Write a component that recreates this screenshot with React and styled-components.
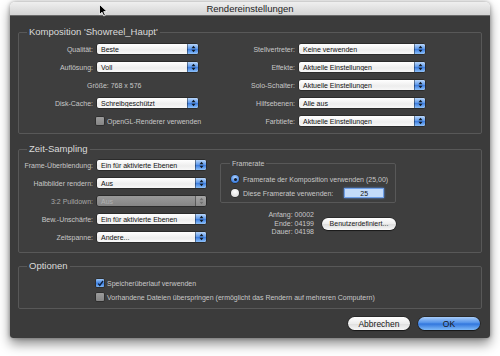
import styled, { createGlobalStyle } from 'styled-components';

const GlobalStyle = createGlobalStyle`
  html, body {
    margin: 0;
    padding: 0;
    background: #fff;
  }
  body {
    width: 500px;
    height: 356px;
    overflow: hidden;
    font-family: "Liberation Sans", Arial, sans-serif;
  }
  * { box-sizing: border-box; }
`;

const Page = styled.div`
  position: relative;
  width: 500px;
  height: 356px;
  padding: 2px 10px 0;
`;

const Window = styled.div`
  width: 480px;
  height: 336px;
  display: flex;
  flex-direction: column;
  border-radius: 5px 5px 3px 3px;
  overflow: hidden;
  box-shadow: 0 6px 12px rgba(0, 0, 0, 0.45), 0 0 4px rgba(0, 0, 0, 0.35);
`;

const TitleBar = styled.div`
  flex: none;
  height: 14px;
  display: flex;
  align-items: center;
  justify-content: center;
  background: linear-gradient(#efefef, #d4d4d4);
  border-bottom: 1px solid #6a6a6a;
  color: #1e1e1e;
  font-size: 9.5px;
`;

const Body = styled.div`
  flex: 1;
  display: flex;
  flex-direction: column;
  background: #3b3b3b;
  padding: 10px 8px 8px;
`;

const Group = styled.fieldset`
  margin: ${(p) => p.$top || 0}px 0 0;
  padding: ${(p) => p.$pad || '2px 0 3px'};
  border: 1px solid #585858;
  border-radius: 2px;
  background: #3e3e3e;
  min-width: 0;
`;

const Legend = styled.legend`
  margin-left: 8px;
  padding: 0 2px;
  height: 12px;
  line-height: 12px;
  font-size: 9.5px;
  color: #dadada;
`;

const SmallLegend = styled.legend`
  margin-left: 9px;
  padding: 0 2px;
  height: 9px;
  line-height: 9px;
  font-size: 7px;
  color: #c8c8c8;
`;

const FormGrid = styled.div`
  display: grid;
  grid-template-columns: ${(p) => p.$cols};
  grid-auto-rows: ${(p) => p.$row || 18}px;
  align-items: center;
`;

const Label = styled.span`
  text-align: right;
  padding-right: 4px;
  font-size: 7px;
  color: ${(p) => (p.$dim ? '#a8a8a8' : '#c8c8c8')};
  white-space: nowrap;
`;

const Info = styled.span`
  grid-column: ${(p) => p.$span || 'auto'};
  padding-left: ${(p) => p.$indent || 0}px;
  font-size: 7px;
  color: #c8c8c8;
  white-space: nowrap;
`;

const SelectBox = styled.div`
  height: 10px;
  display: flex;
  align-items: center;
  border-radius: 2px;
  overflow: hidden;
  background: ${(p) => (p.$disabled ? 'linear-gradient(#9a9a9a, #858585)' : 'linear-gradient(#ffffff, #ededed 60%, #f8f8f8)')};
  box-shadow: 0 0 0 0.5px rgba(0, 0, 0, 0.6);
  font-size: 7px;
  color: ${(p) => (p.$disabled ? '#b0b0b0' : '#111')};
`;

const SelectText = styled.span`
  flex: 1;
  padding-left: 4px;
  white-space: nowrap;
  overflow: hidden;
`;

const SelectArrow = styled.span`
  flex: none;
  width: 11px;
  height: 100%;
  display: flex;
  align-items: center;
  justify-content: center;
  background: ${(p) => (p.$disabled ? 'linear-gradient(#a5a5a5, #8c8c8c)' : 'linear-gradient(#b9d7fb, #5a96ea 50%, #3f7fe0 55%, #8cc0fa)')};
  border-left: 0.5px solid rgba(0, 0, 0, 0.4);
`;

const CheckRow = styled.label`
  display: flex;
  align-items: center;
  gap: 3px;
  padding-left: ${(p) => p.$indent || 0}px;
  font-size: 7px;
  color: #c8c8c8;
  white-space: nowrap;
`;

const CheckBox = styled.span`
  width: 8px;
  height: 8px;
  flex: none;
  display: flex;
  align-items: center;
  justify-content: center;
  border-radius: 1px;
  background: ${(p) => (p.$checked ? 'linear-gradient(#9cc6f7, #3c7fe0 55%, #7db4f5)' : 'linear-gradient(#9c9c9c, #858585)')};
  box-shadow: 0 0 0 0.5px rgba(0, 0, 0, 0.5);
`;

const Radio = styled.span`
  width: 8px;
  height: 8px;
  flex: none;
  border-radius: 50%;
  display: flex;
  align-items: center;
  justify-content: center;
  background: ${(p) => (p.$on ? 'radial-gradient(circle at 50% 35%, #b8d8ff, #3b7ee0 70%)' : 'radial-gradient(circle at 50% 35%, #ffffff, #dcdcdc 80%)')};
  box-shadow: 0 0 0 0.5px rgba(0, 0, 0, 0.6);
  &::after {
    content: '';
    display: ${(p) => (p.$on ? 'block' : 'none')};
    width: 3px;
    height: 3px;
    border-radius: 50%;
    background: #111a2a;
  }
`;

const SamplingRow = styled.div`
  display: flex;
  gap: 14px;
`;

const RightColumn = styled.div`
  width: 176px;
  display: flex;
  flex-direction: column;
  padding-top: 3px;
`;

const RadioRow = styled.div`
  height: 14px;
  display: flex;
  align-items: center;
  gap: 4px;
  padding-left: 10px;
  font-size: 7px;
  color: #c8c8c8;
  white-space: nowrap;
`;

const RateInput = styled.span`
  margin-left: 7px;
  width: 40px;
  height: 10px;
  display: flex;
  align-items: center;
  justify-content: center;
  background: #c3dbfa;
  border: 1px solid #6e9fe8;
  box-shadow: 0 0 2px #5d92e6;
  font-size: 7px;
  color: #111;
`;

const RangeRow = styled.div`
  margin-top: 8px;
  display: flex;
  align-items: center;
  justify-content: flex-end;
  gap: 8px;
`;

const RangeText = styled.div`
  display: flex;
  flex-direction: column;
  align-items: flex-end;
  font-size: 7px;
  line-height: 8.5px;
  color: #c8c8c8;
`;

const PillButton = styled.button`
  width: ${(p) => p.$w}px;
  height: ${(p) => p.$h || 13}px;
  padding: 0;
  border: none;
  border-radius: 7px;
  font-family: inherit;
  font-size: ${(p) => p.$size || 7}px;
  color: #1a1a1a;
  background: ${(p) => (p.$primary ? 'linear-gradient(#a8cdfa, #4d8ee8 48%, #2f74dc 52%, #7fbaf8)' : 'linear-gradient(#ffffff, #ededed 50%, #dedede 52%, #f7f7f7)')};
  box-shadow: 0 0 0 0.5px rgba(0, 0, 0, 0.6), 0 1px 1px rgba(0, 0, 0, 0.4);
`;

const ButtonRow = styled.div`
  margin-top: 8px;
  padding-right: 2px;
  display: flex;
  justify-content: flex-end;
  gap: 8px;
`;

const Cursor = styled.svg`
  position: absolute;
  left: 99px;
  top: 4px;
`;

function Arrows({ disabled }) {
  const c = disabled ? '#6f6f6f' : '#101820';
  return (
    <svg width="5" height="8" viewBox="0 0 5 8">
      <path d="M0.5 3.2 L2.5 0.8 L4.5 3.2 Z" fill={c} />
      <path d="M0.5 4.8 L2.5 7.2 L4.5 4.8 Z" fill={c} />
    </svg>
  );
}

function Select({ value, disabled }) {
  return (
    <SelectBox $disabled={disabled}>
      <SelectText>{value}</SelectText>
      <SelectArrow $disabled={disabled}>
        <Arrows disabled={disabled} />
      </SelectArrow>
    </SelectBox>
  );
}

function Check({ checked, label, indent }) {
  return (
    <CheckRow $indent={indent}>
      <CheckBox $checked={checked}>
        {checked && (
          <svg width="7" height="7" viewBox="0 0 7 7">
            <path d="M1.2 3.6 L2.8 5.4 L6 1" stroke="#0d1e3a" strokeWidth="1.3" fill="none" />
          </svg>
        )}
      </CheckBox>
      {label}
    </CheckRow>
  );
}

export default function App() {
  return (
    <Page>
      <GlobalStyle />
      <Window>
        <TitleBar>Rendereinstellungen</TitleBar>
        <Body>
          <Group>
            <Legend>Komposition 'Showreel_Haupt'</Legend>
            <FormGrid $cols="78px 101px 101px 126px">
              <Label>Qualität:</Label>
              <Select value="Beste" />
              <Label>Stellvertreter:</Label>
              <Select value="Keine verwenden" />

              <Label>Auflösung:</Label>
              <Select value="Voll" />
              <Label>Effekte:</Label>
              <Select value="Aktuelle Einstellungen" />

              <Info $span="1 / 3" $indent={68}>Größe: 768 x 576</Info>
              <Label>Solo-Schalter:</Label>
              <Select value="Aktuelle Einstellungen" />

              <Label>Disk-Cache:</Label>
              <Select value="Schreibgeschützt" />
              <Label>Hilfsebenen:</Label>
              <Select value="Alle aus" />

              <Info $span="1 / 3">
                <Check indent={77} label="OpenGL-Renderer verwenden" />
              </Info>
              <Label>Farbtiefe:</Label>
              <Select value="Aktuelle Einstellungen" />
            </FormGrid>
          </Group>

          <Group $top={9} $pad="1px 0 6px">
            <Legend>Zeit-Sampling</Legend>
            <SamplingRow>
              <FormGrid $cols="78px 109px">
                <Label>Frame-Überblendung:</Label>
                <Select value="Ein für aktivierte Ebenen" />
                <Label>Halbbilder rendern:</Label>
                <Select value="Aus" />
                <Label $dim>3:2 Pulldown:</Label>
                <Select value="Aus" disabled />
                <Label>Bew.-Unschärfe:</Label>
                <Select value="Ein für aktivierte Ebenen" />
                <Label>Zeitspanne:</Label>
                <Select value="Andere..." />
              </FormGrid>
              <RightColumn>
                <Group $pad="4px 0 2px">
                  <SmallLegend>Framerate</SmallLegend>
                  <RadioRow>
                    <Radio $on />
                    Framerate der Komposition verwenden (25,00)
                  </RadioRow>
                  <RadioRow>
                    <Radio />
                    Diese Framerate verwenden:
                    <RateInput>25</RateInput>
                  </RadioRow>
                </Group>
                <RangeRow>
                  <RangeText>
                    <span>Anfang: 00002</span>
                    <span>Ende: 04199</span>
                    <span>Dauer: 04198</span>
                  </RangeText>
                  <PillButton $w={74} $h={12}>Benutzerdefiniert...</PillButton>
                </RangeRow>
              </RightColumn>
            </SamplingRow>
          </Group>

          <Group $top={7} $pad="4px 0 4px">
            <Legend>Optionen</Legend>
            <FormGrid $cols="1fr" $row={14}>
              <Check checked indent={77} label="Speicherüberlauf verwenden" />
              <Check indent={77} label="Vorhandene Dateien überspringen (ermöglicht das Rendern auf mehreren Computern)" />
            </FormGrid>
          </Group>

          <ButtonRow>
            <PillButton $w={62} $size={8.5}>Abbrechen</PillButton>
            <PillButton $w={62} $size={8.5} $primary>OK</PillButton>
          </ButtonRow>
        </Body>
      </Window>
      <Cursor width="9" height="13" viewBox="0 0 9 13">
        <path d="M0.5 0.5 L0.5 10.5 L3 8.2 L4.8 12 L6.4 11.2 L4.7 7.6 L8 7.6 Z" fill="#000" stroke="#fff" strokeWidth="0.8" />
      </Cursor>
    </Page>
  );
}
